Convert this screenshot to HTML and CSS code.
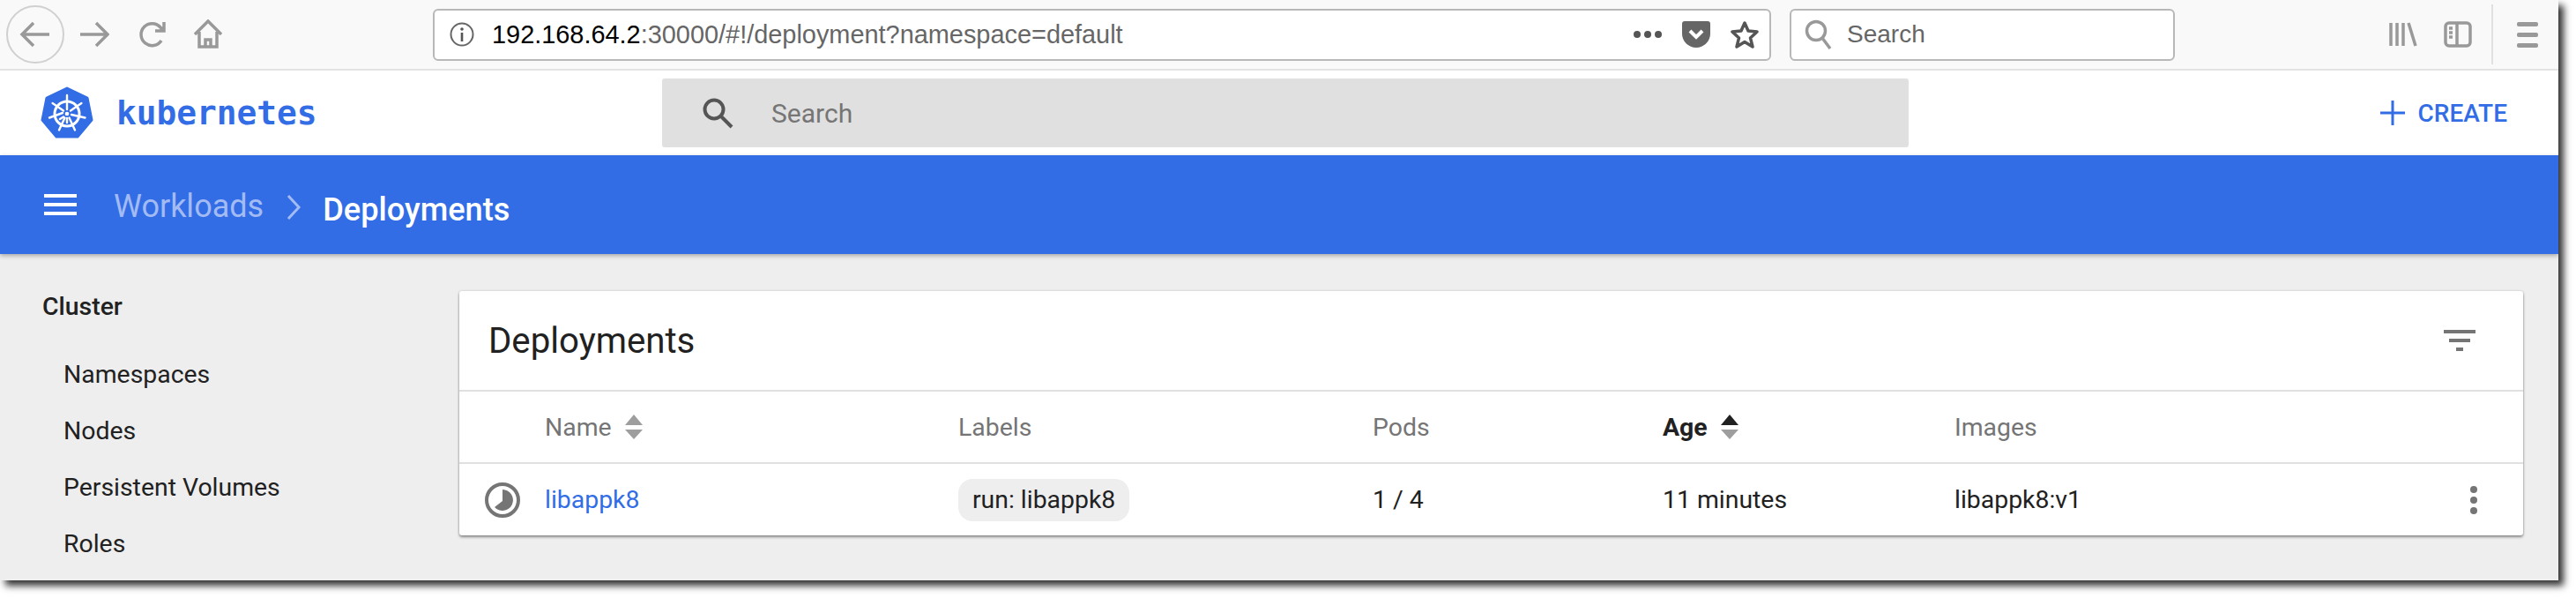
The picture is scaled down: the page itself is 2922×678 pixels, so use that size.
FILE: index.html

```html
<!DOCTYPE html>
<html lang="en">
<head>
  <meta charset="UTF-8" />
  <title>Deployments - Kubernetes Dashboard</title>
  <link rel="stylesheet" href="styles.css">
</head>
<body>
  <div class="window">

    <!-- browser chrome -->
    <div class="browser-bar">
      <div class="nav-buttons">
        <span class="back-btn">
          <svg width="36" height="32" viewBox="0 0 36 32" class="icon-line"><path d="M34 16H4M16 3 3 16l13 13"/></svg>
        </span>
        <svg width="34" height="32" viewBox="0 0 34 32" class="icon-line"><path d="M1 16h30M19 3l13 13-13 13"/></svg>
        <svg width="32" height="32" viewBox="0 0 32 32" class="icon-line reload"><path d="M26 23a12.5 12.5 0 1 1-1-15l3 3M29 2v10H19"/></svg>
        <svg width="34" height="34" viewBox="0 0 34 34" class="icon-line home"><path d="M2 17 17 2l15 15M7 14v17h20V14M14 31v-8h6v8"/></svg>
      </div>

      <div class="url-box">
        <svg width="28" height="28" viewBox="0 0 28 28" class="info-icon"><circle cx="14" cy="14" r="12.5" fill="none" stroke="#666" stroke-width="2"/><rect x="12.7" y="12" width="2.6" height="10" fill="#555"/><circle cx="14" cy="8" r="1.8" fill="#555"/></svg>
        <span class="url-text"><b>192.168.64.2</b>:30000/#!/deployment?namespace=default</span>
        <span class="url-actions">
          <span class="more-dots"><i></i><i></i><i></i></span>
          <svg width="32" height="30" viewBox="0 0 32 30"><path d="M3 0h26a3 3 0 0 1 3 3v11a16 16 0 0 1-32 0V3a3 3 0 0 1 3-3z" fill="#666"/><path d="M9 11l7 7 7-7" fill="none" stroke="#fff" stroke-width="4"/></svg>
          <svg width="32" height="32" viewBox="0 0 32 32"><path d="M16 3l4 9 10 1-7.5 7 2.5 10-9-5.5L7 30l2.5-10L2 13l10-1z" fill="none" stroke="#555" stroke-width="3.5" stroke-linejoin="round"/></svg>
        </span>
      </div>

      <div class="browser-search">
        <svg width="32" height="34" viewBox="0 0 32 34" class="icon-line"><circle cx="13" cy="13" r="10.5"/><path d="M20 21l9 12"/></svg>
        <span>Search</span>
      </div>

      <div class="browser-tools">
        <svg width="32" height="30" viewBox="0 0 32 30" class="icon-line"><path d="M2 2v26M9 2v26M16 2v26M22 2l8 26"/></svg>
        <svg width="32" height="30" viewBox="0 0 32 30" class="icon-line"><rect x="2" y="2" width="28" height="26" rx="4"/><path d="M15 2v26M6 8h4M6 13h4M6 18h4"/></svg>
        <span class="tools-sep"></span>
        <span class="burger"><i></i><i></i><i></i></span>
      </div>
    </div>

    <!-- app toolbar -->
    <div class="app-toolbar">
      <div class="brand">
        <svg width="60" height="60" viewBox="0 0 60 60">
          <path d="M30 2 53 13 58 38 42 57H18L2 38 7 13z" fill="#326de6" stroke="#326de6" stroke-width="3" stroke-linejoin="round"/>
          <g fill="none" stroke="#fff">
            <circle cx="30" cy="31" r="14" stroke-width="3"/>
            <path stroke-width="2.4" stroke-linecap="round" d="M30 10V26M30 36V41M46.4 19 34 27.5M26 34.5 22 37M50.5 35.5 35 32M25 30 10 35.5M39 49.5 32.5 35.5M27.5 35.5 21 49.5M13.6 19 26 27.5"/>
          </g>
          <circle cx="30" cy="31" r="2.3" fill="#fff"/>
        </svg>
        <span class="brand-name">kubernetes</span>
      </div>
      <div class="app-search">
        <svg width="36" height="36" viewBox="0 0 36 36" fill="none" stroke="#555" stroke-width="4"><circle cx="14" cy="14" r="10.5"/><path d="M22 22l12 12"/></svg>
        <span>Search</span>
      </div>
      <div class="create-btn">
        <svg width="28" height="28" viewBox="0 0 28 28"><path d="M14 0v28M0 14h28" stroke="#326de6" stroke-width="3"/></svg>
        <span>CREATE</span>
      </div>
    </div>

    <!-- breadcrumb bar -->
    <div class="title-bar">
      <span class="menu-icon"><i></i><i></i><i></i></span>
      <span class="crumb-parent">Workloads</span>
      <svg width="18" height="30" viewBox="0 0 18 30" class="crumb-sep"><path d="M3 2l12 13L3 28" fill="none" stroke="#a3bbf3" stroke-width="3"/></svg>
      <span class="crumb-current">Deployments</span>
    </div>

    <div class="content">
      <nav class="sidebar">
        <div class="side-head">Cluster</div>
        <a class="side-link">Namespaces</a>
        <a class="side-link">Nodes</a>
        <a class="side-link">Persistent Volumes</a>
        <a class="side-link">Roles</a>
      </nav>

      <main class="main">
        <section class="card">
          <div class="card-head">
            <h2>Deployments</h2>
            <svg width="36" height="24" viewBox="0 0 36 24" fill="#757575"><rect width="36" height="4"/><rect x="6" y="10" width="24" height="4"/><rect x="14" y="20" width="8" height="4"/></svg>
          </div>

          <div class="table-row table-header">
            <span></span>
            <span class="cell-sort">Name
              <svg width="20" height="28" viewBox="0 0 20 28" fill="#9e9e9e"><path d="M10 0l10 12H0zM0 17h20L10 28z"/></svg>
            </span>
            <span>Labels</span>
            <span>Pods</span>
            <span class="cell-sort sorted">Age
              <svg width="20" height="28" viewBox="0 0 20 28"><path fill="#212121" d="M10 0l10 12H0z"/><path fill="#9e9e9e" d="M0 17h20L10 28z"/></svg>
            </span>
            <span>Images</span>
          </div>

          <div class="table-row">
            <span class="status-cell">
              <svg width="40" height="40" viewBox="0 0 40 40"><circle cx="20" cy="20" r="18" fill="none" stroke="#757575" stroke-width="4"/><path d="M20 8a12 12 0 1 1-9 20l9-7z" fill="#757575"/></svg>
            </span>
            <a class="row-name">libappk8</a>
            <span><span class="chip">run: libappk8</span></span>
            <span>1 / 4</span>
            <span>11 minutes</span>
            <span>libappk8:v1</span>
            <span class="row-menu"><i></i><i></i><i></i></span>
          </div>
        </section>
      </main>
    </div>
  </div>
</body>
</html>
```

FILE: styles.css

```css
html, body {
  margin: 0;
  height: 100%;
  background-color: #fff;
}
body {
  font-family: Roboto, Arial, sans-serif;
  overflow: hidden;
}
i {
  display: block;
}
.window {
  width: 2902px;
  height: 658px;
  background-color: #eee;
  box-shadow: 6px 6px 8px #333;
  overflow: hidden;
}
.icon-line {
  fill: none;
  stroke: #999;
  stroke-width: 3.5;
}

/* browser chrome */
.browser-bar {
  display: flex;
  align-items: center;
  height: 78px;
  background-color: #f9f9f9;
  border-bottom: 2px solid #e3e3e3;
  padding-left: 7px;
}
.nav-buttons {
  display: flex;
  align-items: center;
  width: 484px;
  flex-shrink: 0;
}
.back-btn {
  display: flex;
  align-items: center;
  justify-content: center;
  width: 66px;
  height: 66px;
  box-sizing: border-box;
  border: 2px solid #d0d0d0;
  border-radius: 50%;
  margin-right: 17px;
}
.reload {
  margin-left: 33px;
}
.home {
  margin-left: 30px;
}
.url-box {
  display: flex;
  align-items: center;
  width: 1518px;
  height: 59px;
  box-sizing: border-box;
  background-color: #fff;
  border: 2px solid #b8b8b8;
  border-radius: 6px;
  padding: 0 12px 0 17px;
  margin-right: 21px;
}
.url-text {
  margin-left: 20px;
  font-family: "Liberation Sans", Arial, sans-serif;
  font-size: 28.9px;
  color: #666;
  white-space: nowrap;
}
.url-text b {
  font-weight: normal;
  color: #000;
}
.url-actions {
  display: flex;
  align-items: center;
  gap: 23px;
  margin-left: auto;
}
.more-dots {
  display: flex;
  gap: 4px;
}
.more-dots i {
  width: 8px;
  height: 8px;
  border-radius: 50%;
  background-color: #555;
}
.browser-search {
  display: flex;
  align-items: center;
  gap: 16px;
  width: 437px;
  height: 59px;
  box-sizing: border-box;
  background-color: #fff;
  border: 2px solid #b8b8b8;
  border-radius: 6px;
  padding-left: 15px;
  font-family: "Liberation Sans", Arial, sans-serif;
  font-size: 28px;
  color: #666;
}
.browser-tools {
  display: flex;
  align-items: center;
  margin-left: 243px;
}
.browser-tools svg + svg {
  margin-left: 30px;
}
.tools-sep {
  width: 2px;
  height: 68px;
  background-color: #e0e0e0;
  margin: 0 27px 0 22px;
}
.burger i {
  width: 24px;
  height: 5px;
  border-radius: 2px;
  background-color: #999;
  margin: 7px 0;
}

/* app toolbar */
.app-toolbar {
  display: flex;
  align-items: center;
  height: 96px;
  background-color: #fff;
  padding-left: 46px;
}
.brand {
  display: flex;
  align-items: center;
  gap: 26px;
  width: 705px;
  flex-shrink: 0;
}
.brand-name {
  font-family: "DejaVu Sans Mono", monospace;
  font-weight: bold;
  font-size: 37.8px;
  color: #326de6;
}
.app-search {
  display: flex;
  align-items: center;
  gap: 43px;
  width: 1414px;
  height: 78px;
  box-sizing: border-box;
  background-color: #e0e0e0;
  border-radius: 3px;
  padding-left: 45px;
  font-size: 30px;
  color: #757575;
}
.create-btn {
  display: flex;
  align-items: center;
  gap: 15px;
  margin-left: auto;
  margin-right: 58px;
  font-size: 28px;
  font-weight: 500;
  color: #326de6;
}

/* breadcrumb bar */
.title-bar {
  display: flex;
  align-items: center;
  height: 112px;
  background-color: #326de6;
  padding-left: 50px;
  box-shadow: 0 2px 5px rgba(0, 0, 0, 0.3);
  position: relative;
}
.menu-icon {
  width: 37px;
}
.menu-icon i {
  height: 4px;
  background-color: #fff;
  margin: 6px 0;
}
.crumb-parent {
  margin: 3px 0 0 42px;
  font-size: 36px;
  color: #a3bbf3;
}
.crumb-sep {
  margin: 6px 25px 0 25px;
}
.crumb-current {
  margin: 10px 0 0 -1px;
  font-size: 36.2px;
  font-weight: 500;
  color: #fff;
}

/* content */
.content {
  display: flex;
  height: 370px;
}
.sidebar {
  width: 521px;
  flex-shrink: 0;
  padding: 42px 0 0 48px;
  box-sizing: border-box;
  font-size: 28.4px;
  color: #212121;
}
.side-head {
  height: 36px;
  line-height: 36px;
  font-weight: 500;
  margin-bottom: 41px;
}
.side-link {
  display: block;
  height: 64px;
  line-height: 36px;
  padding-left: 24px;
}
.main {
  padding-top: 42px;
  width: 2341px;
}
.card {
  background-color: #fff;
  border-radius: 3px;
  box-shadow: 0 2px 3px rgba(0, 0, 0, 0.4), 0 0 3px rgba(0, 0, 0, 0.15);
}
.card-head {
  display: flex;
  align-items: center;
  justify-content: space-between;
  height: 112px;
  padding: 0 54px 0 33px;
  border-bottom: 2px solid #e0e0e0;
}
.card-head h2 {
  margin: 0;
  font-size: 40.2px;
  font-weight: 400;
  color: #212121;
}
.table-row {
  display: grid;
  grid-template-columns: 97px 469px 470px 329px 331px 1fr 60px;
  align-items: center;
  height: 81px;
  font-size: 28.4px;
  color: #212121;
}
.table-header {
  height: 80px;
  border-bottom: 2px solid #e0e0e0;
  color: #757575;
}
.cell-sort {
  display: flex;
  align-items: center;
  gap: 15px;
}
.sorted {
  font-weight: 700;
  color: #212121;
}
.status-cell {
  display: flex;
  padding-left: 29px;
}
.row-name {
  color: #326de6;
}
.chip {
  display: inline-block;
  height: 48px;
  line-height: 48px;
  padding: 0 16px;
  border-radius: 16px;
  background-color: #eee;
}
.row-menu i {
  width: 8px;
  height: 8px;
  border-radius: 50%;
  background-color: #757575;
  margin: 4px 0;
}
```
